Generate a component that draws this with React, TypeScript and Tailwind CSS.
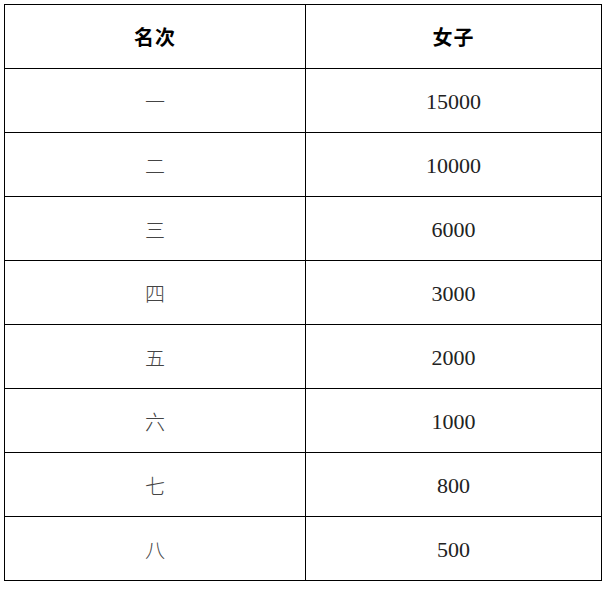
import React from "react";

const rows: [string, string][] = [
  ["一", "15000"],
  ["二", "10000"],
  ["三", "6000"],
  ["四", "3000"],
  ["五", "2000"],
  ["六", "1000"],
  ["七", "800"],
  ["八", "500"],
];

export default function App() {
  return (
    <div className="w-[606px] h-[589px] bg-white pl-[4px] pt-[4px]">
      <table className="border-collapse w-[597px] table-fixed">
        <colgroup>
          <col className="w-[301px]" />
          <col className="w-[296px]" />
        </colgroup>
        <thead>
          <tr className="h-[64px]">
            <th className="border border-black text-center align-middle text-[20px] font-semibold text-black font-['Noto_Sans_CJK_SC',sans-serif] tracking-[1px]">
              名次
            </th>
            <th className="border border-black text-center align-middle text-[20px] font-semibold text-black font-['Noto_Sans_CJK_SC',sans-serif] tracking-[1px]">
              女子
            </th>
          </tr>
        </thead>
        <tbody>
          {rows.map(([a, b]) => (
            <tr key={a} className="h-[64px]">
              <td className="border border-black text-center align-middle text-[20px] text-[#444] font-['Noto_Sans_CJK_SC',sans-serif] font-light pt-[2px]">
                {a}
              </td>
              <td className="border border-black text-center align-middle text-[22px] text-[#222] font-['Liberation_Serif',serif] pt-[2px]">
                {b}
              </td>
            </tr>
          ))}
        </tbody>
      </table>
    </div>
  );
}
